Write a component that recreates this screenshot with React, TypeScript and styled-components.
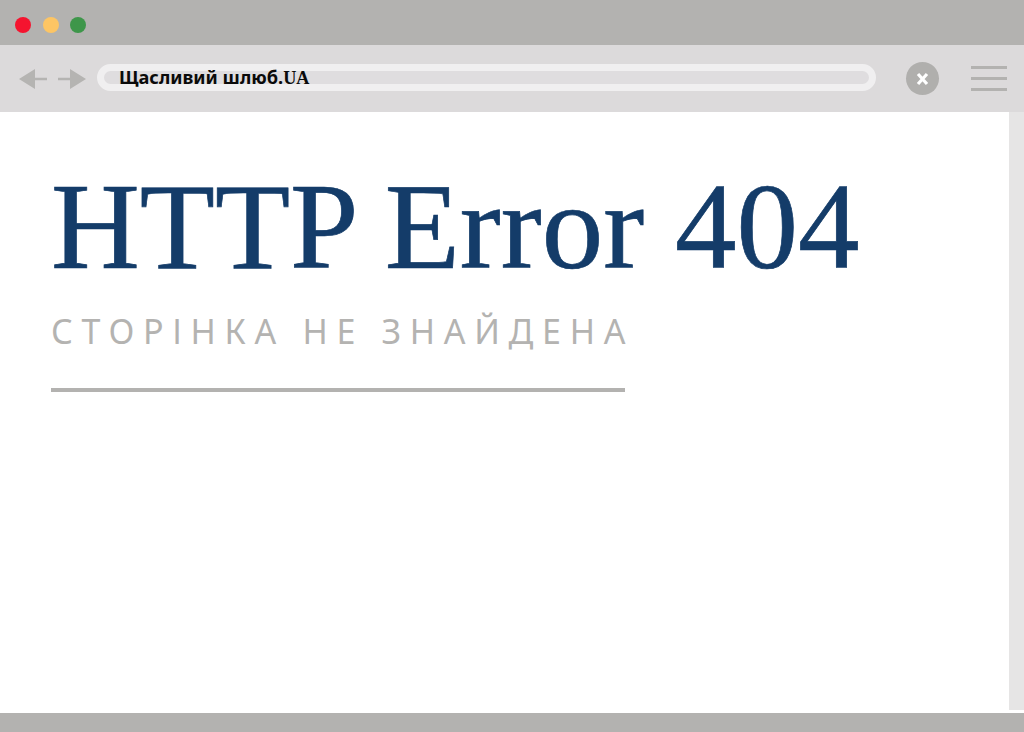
import React from 'react'
import styled, { createGlobalStyle } from 'styled-components'

const GlobalStyle = createGlobalStyle`
  html, body {
    margin: 0;
    padding: 0;
    background: #fff;
    overflow: hidden;
  }
`

const Page = styled.div`
  width: 1024px;
  height: 732px;
  display: flex;
  flex-direction: column;
  overflow: hidden;
`

const TitleBar = styled.div`
  height: 45px;
  flex: none;
  display: flex;
  align-items: center;
  gap: 11.5px;
  padding: 4px 0 0 15px;
  background: #b3b2b0;
  box-sizing: border-box;
`

const Dot = styled.span<{ $color: string }>`
  width: 16px;
  height: 16px;
  border-radius: 50%;
  background: ${p => p.$color};
`

const Toolbar = styled.div`
  height: 67px;
  flex: none;
  display: flex;
  align-items: center;
  padding: 0 17px 0 19px;
  background: #dcdadb;
  box-sizing: border-box;
`

const NavIcons = styled.div`
  display: flex;
  align-items: center;
  gap: 11px;
  margin-right: 11px;
`

const AddressBar = styled.div`
  width: 779px;
  height: 27px;
  flex: none;
  display: flex;
  align-items: center;
  border-radius: 14px;
  background: #dfdddf;
  border: 7px solid #f0eff0;
  box-sizing: border-box;
  margin: 0 30px 2px 0;
`

const AddressText = styled.span`
  margin: 0 0 0 15px;
  font-family: "Noto Sans", sans-serif;
  font-weight: 700;
  font-size: 18.2px;
  line-height: 13px;
  color: #0a0a0a;
  white-space: nowrap;
`

const Domain = styled.span`
  font-family: "Liberation Serif", serif;
  font-size: 18.2px;
`

const CloseButton = styled.div`
  width: 33px;
  height: 33px;
  flex: none;
  border-radius: 50%;
  background: #b0afad;
  display: flex;
  align-items: center;
  justify-content: center;
  margin-right: 32px;
`

const Burger = styled.div`
  width: 36px;
  flex: none;
  display: flex;
  flex-direction: column;
  gap: 7.5px;
`

const BurgerLine = styled.span`
  height: 3.5px;
  background: #b3b2b0;
`

const Body = styled.div`
  flex: 1;
  display: flex;
  min-height: 0;
`

const Content = styled.main`
  flex: 1;
  padding: 49px 0 0 51px;
`

const Scrollbar = styled.div`
  width: 15px;
  height: 598px;
  flex: none;
  background: #e6e5e5;
`

const Heading = styled.h1`
  margin: 0;
  font-family: "Liberation Serif", serif;
  font-weight: 400;
  font-size: 123px;
  line-height: 132px;
  color: #143c69;
  -webkit-text-stroke: 0.7px #143c69;
  white-space: nowrap;
`

const Subheading = styled.p`
  margin: 15px 0 0;
  font-family: "Noto Sans", sans-serif;
  font-size: 34px;
  line-height: 46px;
  letter-spacing: 8.7px;
  color: #b4b3b1;
  white-space: nowrap;
`

const Rule = styled.div`
  width: 574px;
  height: 4px;
  margin-top: 34px;
  background: #b3b2b0;
`

const Footer = styled.div`
  height: 19px;
  flex: none;
  background: #b3b2b0;
`

const Arrow = ({ flip }: { flip?: boolean }) => (
  <svg width="28" height="20" viewBox="0 0 28 20" style={flip ? { transform: 'scaleX(-1)' } : undefined}>
    <path d="M0 10 L16 0 V8.7 H28 V11.3 H16 V20 Z" fill="#b5b4b2" />
  </svg>
)

export default function App() {
  return (
    <Page>
      <GlobalStyle />
      <TitleBar>
        <Dot $color="#f5142f" />
        <Dot $color="#fdc564" />
        <Dot $color="#3e964a" />
      </TitleBar>
      <Toolbar>
        <NavIcons>
          <Arrow />
          <Arrow flip />
        </NavIcons>
        <AddressBar>
          <AddressText>
            Щасливий шлюб.<Domain>UA</Domain>
          </AddressText>
        </AddressBar>
        <CloseButton>
          <svg width="13" height="14" viewBox="0 0 13 14">
            <path d="M2 2 L11 12 M11 2 L2 12" stroke="#fff" strokeWidth="3.2" />
          </svg>
        </CloseButton>
        <Burger>
          <BurgerLine />
          <BurgerLine />
          <BurgerLine />
        </Burger>
      </Toolbar>
      <Body>
        <Content>
          <Heading>HTTP Error 404</Heading>
          <Subheading>СТОРІНКА НЕ ЗНАЙДЕНА</Subheading>
          <Rule />
        </Content>
        <Scrollbar />
      </Body>
      <Footer />
    </Page>
  )
}
